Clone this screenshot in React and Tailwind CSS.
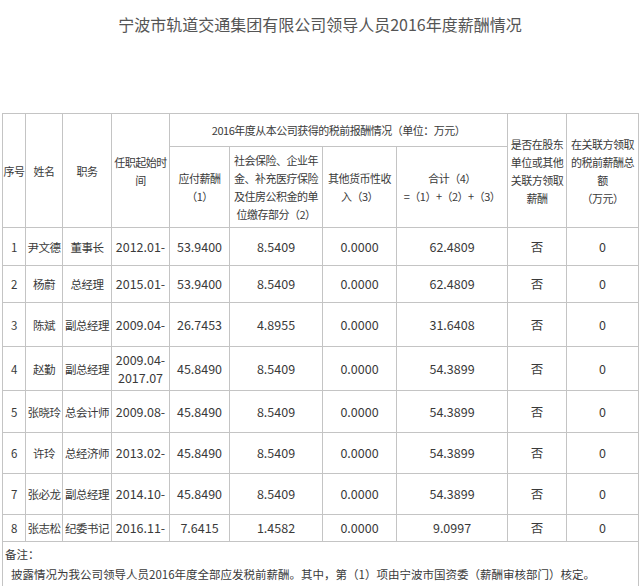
export default function App() {
  const rows = [
    ["1","尹文德","董事长","2012.01-","53.9400","8.5409","0.0000","62.4809","否","0",38],
    ["2","杨蔚","总经理","2015.01-","53.9400","8.5409","0.0000","62.4809","否","0",37],
    ["3","陈斌","副总经理","2009.04-","26.7453","4.8955","0.0000","31.6408","否","0",44],
    ["4","赵勤","副总经理","2009.04-\n2017.07","45.8490","8.5409","0.0000","54.3899","否","0",44],
    ["5","张晓玲","总会计师","2009.08-","45.8490","8.5409","0.0000","54.3899","否","0",42],
    ["6","许玲","总经济师","2013.02-","45.8490","8.5409","0.0000","54.3899","否","0",41],
    ["7","张必龙","副总经理","2014.10-","45.8490","8.5409","0.0000","54.3899","否","0",41],
    ["8","张志松","纪委书记","2016.11-","7.6415","1.4582","0.0000","9.0997","否","0",27],
  ];
  const widths = [23,37,49,58,60,93,74,111,59,72];
  const td = "border border-[#c4c4c4] text-center p-0 leading-[18px] overflow-hidden";
  const h = td + " whitespace-nowrap tracking-[-0.5px] text-[11px]";
  return (
    <div className="w-[640px] h-[586px] bg-white overflow-hidden text-[#3a3a3a]" style={{fontFamily:'"Noto Sans CJK SC", sans-serif'}}>
      <div className="h-[113px] pt-[12px] text-center text-[16px] text-[#555]">宁波市轨道交通集团有限公司领导人员2016年度薪酬情况</div>
      <table className="ml-[2px] border-collapse table-fixed text-[11.5px]" style={{width:636}}>
        <colgroup>{widths.map((w,i)=><col key={i} style={{width:w}}/>)}</colgroup>
        <tbody>
          <tr style={{height:33}}>
            <td rowSpan={2} className={h}>序号</td>
            <td rowSpan={2} className={h}>姓名</td>
            <td rowSpan={2} className={h}>职务</td>
            <td rowSpan={2} className={h}>任职起始时<br/>间</td>
            <td colSpan={4} className={h}>2016年度从本公司获得的税前报酬情况（单位：万元）</td>
            <td rowSpan={2} className={h}>是否在股东<br/>单位或其他<br/>关联方领取<br/>薪酬</td>
            <td rowSpan={2} className={h}>在关联方领取<br/>的税前薪酬总<br/>额<br/>（万元）</td>
          </tr>
          <tr style={{height:81}}>
            <td className={h}>应付薪酬<br/>（1）</td>
            <td className={h}>社会保险、企业年<br/>金、补充医疗保险<br/>及住房公积金的单<br/>位缴存部分（2）</td>
            <td className={h}>其他货币性收<br/>入（3）</td>
            <td className={h}>合计（4）<br/>=（1）+（2）+（3）</td>
          </tr>
          {rows.map(r=>(
            <tr key={r[0]} style={{height:r[10]}}>
              {r.slice(0,10).map((c,i)=>(
                <td key={i} className={td + (i>=3 ? " text-[12.5px]" : " text-[11.5px] tracking-[-0.5px]") + " whitespace-pre-line"}>{c}</td>
              ))}
            </tr>
          ))}
          <tr>
            <td colSpan={10} className="border border-[#c4c4c4] px-[2px] pt-[2px] pb-[8px] leading-[20px] text-[11.5px] whitespace-nowrap">
              备注：<br/>
              <span className="pl-[6px]">披露情况为我公司领导人员2016年度全部应发税前薪酬。其中，第（1）项由宁波市国资委（薪酬审核部门）核定。</span>
            </td>
          </tr>
        </tbody>
      </table>
    </div>
  );
}
